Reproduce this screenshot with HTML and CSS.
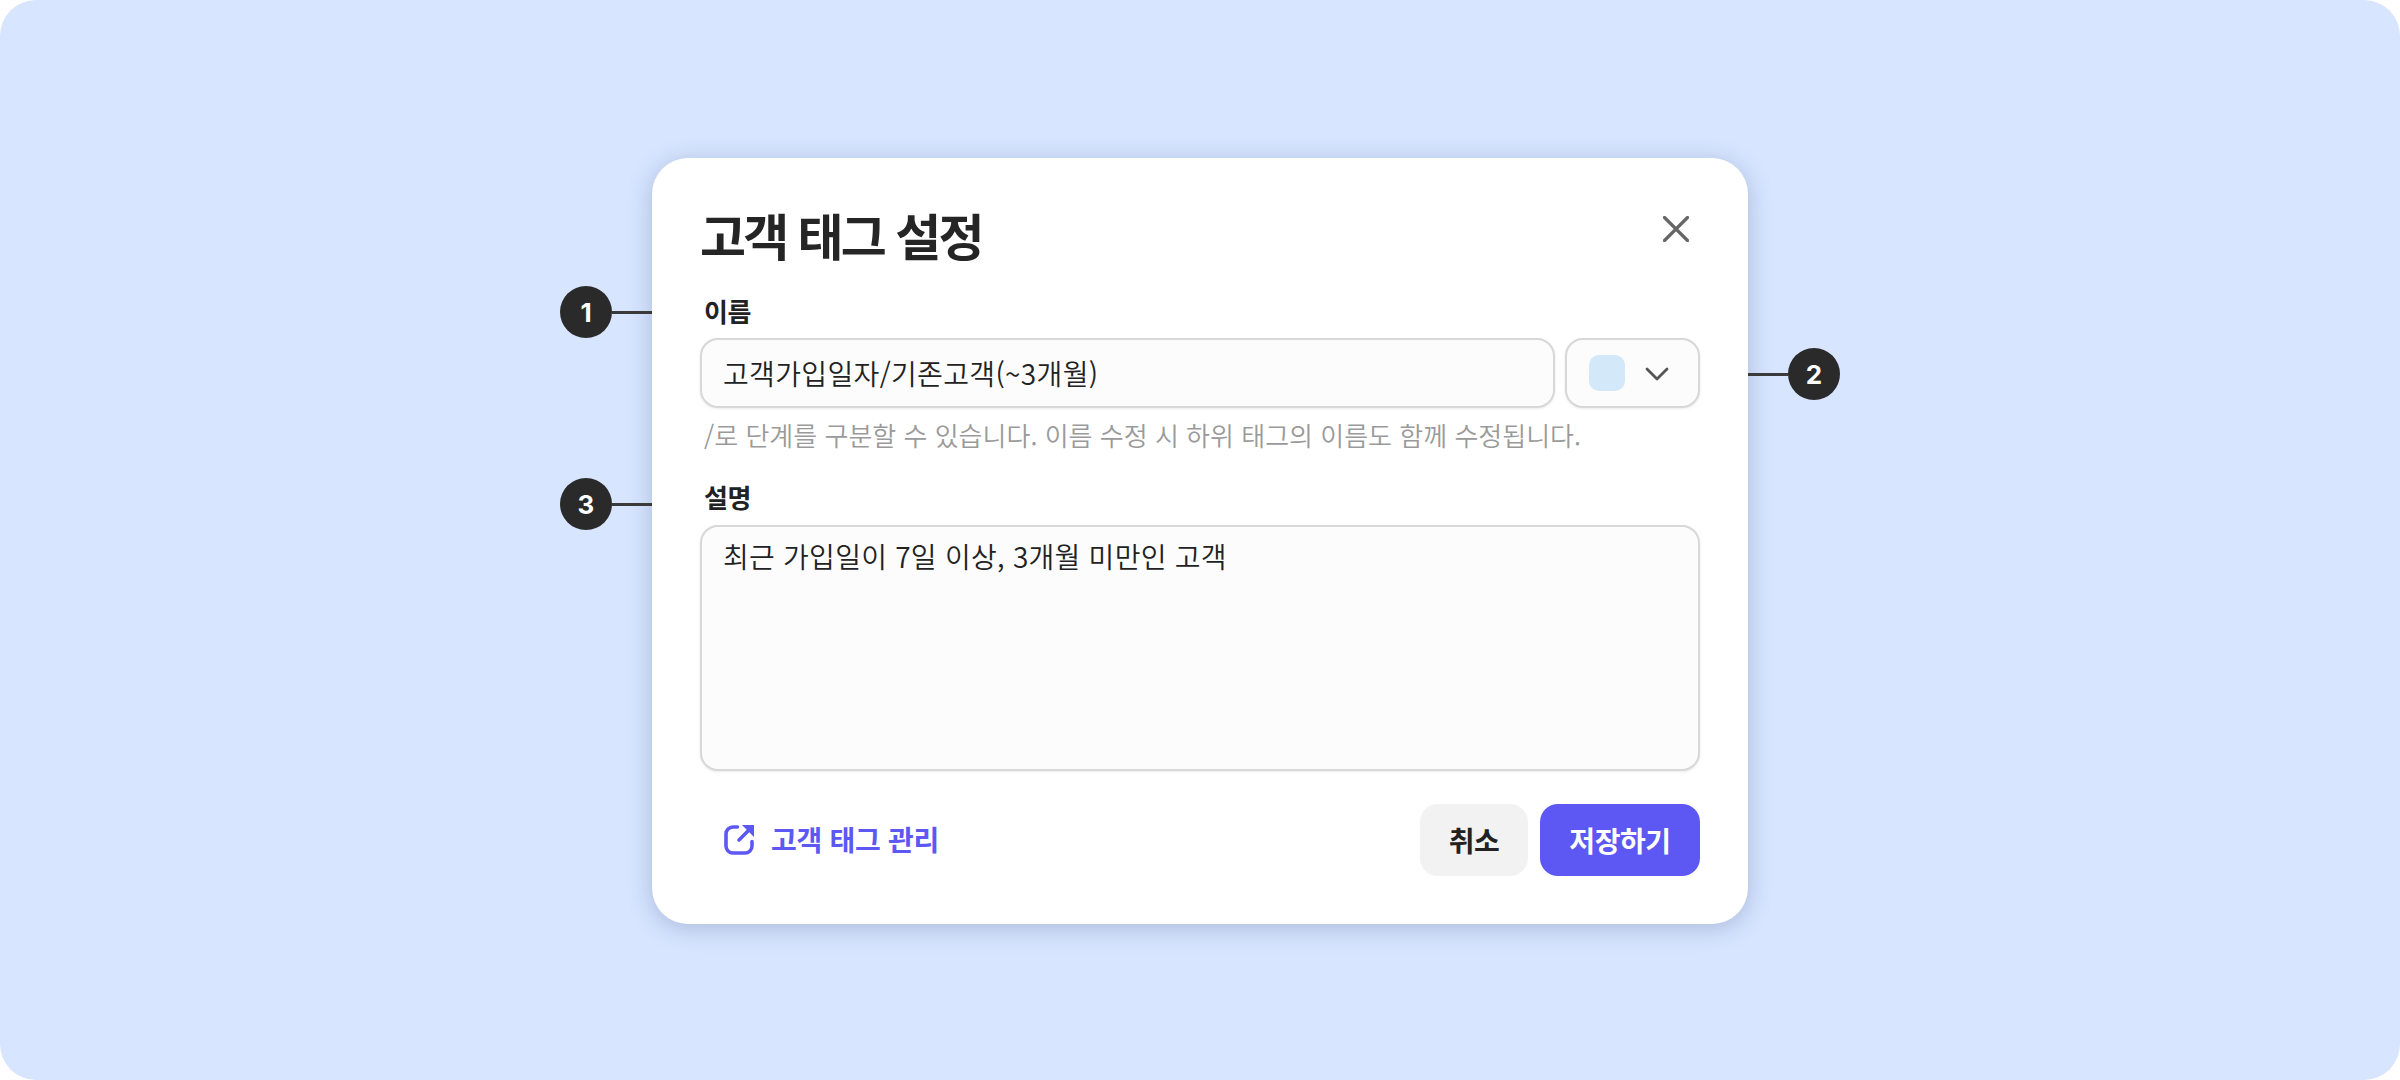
FILE: index.html
```html
<!DOCTYPE html>
<html lang="ko">
<head>
<meta charset="utf-8">
<title>고객 태그 설정</title>
<link rel="stylesheet" href="styles.css">
</head>
<body>
<main class="stage">
  <section class="card">
    <header class="card-head">
      <h1 class="title">고객 태그 설정</h1>
      <svg class="close" viewBox="0 0 26 26" width="26" height="26" fill="none"><path d="M1.500 1.500 24.500 24.500M24.500 1.500 1.500 24.500" stroke="#666" stroke-width="3.200" stroke-linecap="round"/></svg>
    </header>
    <div class="label label-name">이름</div>
    <div class="name-row">
      <div class="field name-field">고객가입일자/기존고객(~3개월)</div>
      <div class="field color-field">
        <span class="swatch"></span>
        <svg class="chev" viewBox="0 0 24 14" width="24" height="14" fill="none"><path d="M2 2 12 12 22 2" stroke="#555" stroke-width="2.800" stroke-linecap="round" stroke-linejoin="round"/></svg>
      </div>
    </div>
    <p class="hint">/로 단계를 구분할 수 있습니다. 이름 수정 시 하위 태그의 이름도 함께 수정됩니다.</p>
    <div class="label label-desc">설명</div>
    <div class="field area">최근 가입일이 7일 이상, 3개월 미만인 고객</div>
    <footer class="card-foot">
      <a class="manage">
        <svg viewBox="0 0 30 30" width="30" height="30" fill="none"><path d="M13.500 2H9a7 7 0 0 0-7 7v12a7 7 0 0 0 7 7h12a7 7 0 0 0 7-7v-4.500" stroke="#5d58f4" stroke-width="3.600" stroke-linecap="round"/><path d="M15 15 25 5" stroke="#5d58f4" stroke-width="3.600" stroke-linecap="round"/><path d="M18 0H30V12z" fill="#5d58f4"/></svg>
        <span class="manage-text">고객 태그 관리</span>
      </a>
      <div class="actions">
        <button class="btn btn-cancel">취소</button>
        <button class="btn btn-save">저장하기</button>
      </div>
    </footer>
    <div class="marker marker-1"><span class="dot">1</span><span class="line"></span></div>
    <div class="marker marker-2"><span class="line"></span><span class="dot">2</span></div>
    <div class="marker marker-3"><span class="dot">3</span><span class="line"></span></div>
  </section>
</main>
</body>
</html>
```
FILE: styles.css
```css
* { box-sizing: border-box; }
html, body { margin: 0; height: 100%; background: #fff; }
body { font-family: "Noto Sans CJK KR", "Inter", sans-serif; color: #222; }
.stage {
  width: 2400px; height: 1080px; background: #d7e5ff; border-radius: 36px;
  display: flex; justify-content: center; padding-top: 158px;
}
.card {
  position: relative; width: 1096px; height: 766px; background: #fff; border-radius: 36px;
  padding: 0 48px 48px; box-shadow: 0 4px 24px rgba(40, 60, 110, .26);
  display: flex; flex-direction: column;
}
.card-head { height: 112px; display: flex; justify-content: space-between; align-items: center; padding-right: 11px; padding-top: 40px; }
.title { margin: 0; font-size: 50px; font-weight: 700; letter-spacing: -2.800px; line-height: 1; color: #252525; }
.close { margin-top: -9px; }
.label { font-size: 26px; font-weight: 700; line-height: 36px; padding-left: 4px; color: #222; letter-spacing: -.3px; }
.label-name { height: 54px; display: flex; align-items: center; margin-top: 15px; }
.name-row { display: flex; gap: 10px; }
.field {
  background: #fcfcfc; border: 2.500px solid #d8d8d8; border-radius: 18px;
  box-shadow: 0 1px 3px rgba(0,0,0,.08); font-size: 28px; font-weight: 350; color: #222; letter-spacing: .25px;
}
.name-field { flex: 1; height: 70px; display: flex; align-items: center; padding: 0 21px; letter-spacing: .35px; }
.color-field { width: 135px; height: 70px; display: flex; align-items: center; padding-left: 22px; gap: 20px; }
.swatch { width: 36px; height: 36px; border-radius: 10px; background: #d3e8f8; }
.chev { margin-top: 2px; }
.hint { margin: 9px 0 0; padding-left: 4px; font-size: 26px; font-weight: 350; line-height: 36px; color: #9a9a9a; letter-spacing: 0; }
.label-desc { margin-top: 24px; height: 40px; margin-bottom: 8px; display: flex; align-items: center; }
.area { height: 247px; padding: 9px 21px; line-height: 40px; }
.card-foot { margin-top: 33px; display: flex; justify-content: space-between; align-items: center; }
.manage { display: flex; align-items: center; gap: 17px; padding-left: 24px; color: #5d58f4; font-size: 28px; font-weight: 700; letter-spacing: -.3px; }
.manage svg { flex: none; }
.manage-text { padding-bottom: 2px; }
.actions { display: flex; gap: 12px; }
.btn { height: 72px; border: 0; border-radius: 18px; font-family: inherit; font-size: 28px; font-weight: 700; letter-spacing: -.4px; }
.btn-cancel { width: 108px; background: #f2f2f2; color: #222; }
.btn-save { width: 160px; background: #5d58f4; color: #fff; }
.marker { position: absolute; display: flex; align-items: center; height: 52px; }
.marker-1 { left: -92px; top: 128px; }
.marker-2 { right: -92px; top: 190px; }
.marker-3 { left: -92px; top: 320px; }
.dot {
  width: 52px; height: 52px; border-radius: 50%; background: #2a2a2a; color: #fff;
  display: flex; align-items: center; justify-content: center;
  font-family: "Inter", sans-serif; font-size: 26px; font-weight: 700;
}
.line { width: 40px; height: 3px; background: #3a3a3a; }
```
